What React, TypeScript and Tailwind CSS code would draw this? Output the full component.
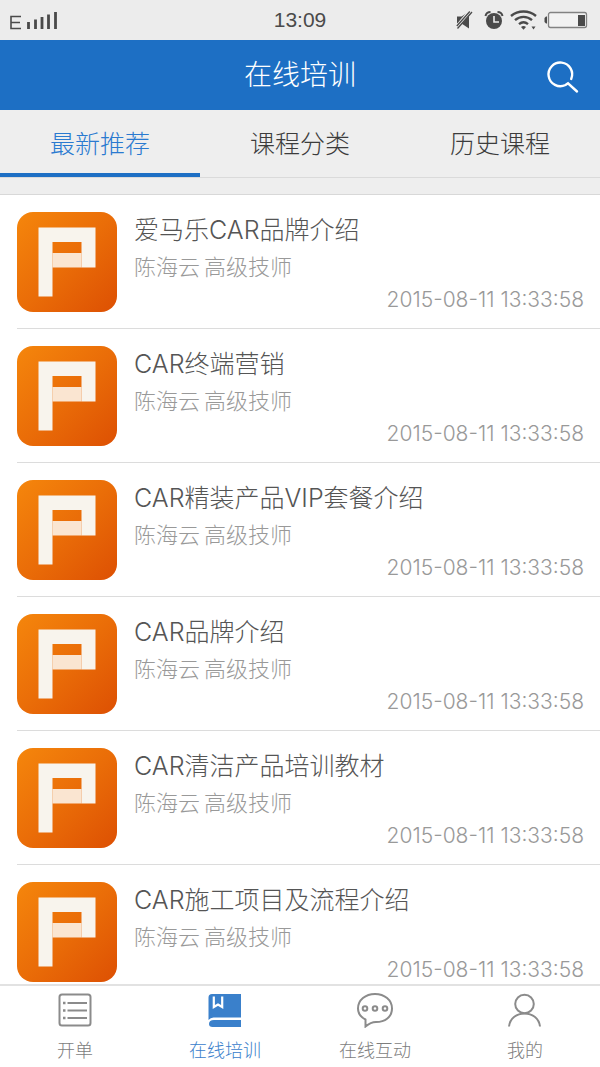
import React from "react";

const COURSES = [
  "爱马乐CAR品牌介绍",
  "CAR终端营销",
  "CAR精装产品VIP套餐介绍",
  "CAR品牌介绍",
  "CAR清洁产品培训教材",
  "CAR施工项目及流程介绍",
];

const TABS = ["最新推荐", "课程分类", "历史课程"];

function StatusBar() {
  return (
    <div className="grid h-10 shrink-0 grid-cols-3 items-center bg-[#ececec] text-[#4a4a4a]">
      <svg className="ml-2" width="52" height="24" viewBox="0 0 52 24" role="img" aria-label="信号">
        <path d="M13 8.500H3v12h10M3 14.500h9" fill="none" stroke="currentColor" strokeWidth="1.600" />
        <path d="M20.500 14v7M27.500 11.500v9.500M34 9v12M40.500 6.500v14.500M47.500 4v17" stroke="currentColor" strokeWidth="2.800" />
      </svg>
      <span className="text-center font-['Liberation_Sans',sans-serif] text-[21px] leading-10">13:09</span>
      <div className="flex items-center justify-end gap-1.5 pr-3">
        <svg className="mr-1" width="18" height="20" viewBox="0 0 18 20" role="img" aria-label="静音">
          <path d="M1 6.500h4.500L13 1.500v17L5.500 13.500H1z" fill="currentColor" />
          <path d="M0 18 15 0" stroke="#ececec" strokeWidth="4" />
          <path d="M1.500 18.500 16 2M.8 16 13.800 1.500" stroke="currentColor" strokeWidth="1.300" />
        </svg>
        <svg width="20" height="20" viewBox="0 0 20 20" role="img" aria-label="闹钟">
          <circle cx="10" cy="11" r="8" fill="currentColor" />
          <path d="M10 6v6h5" fill="none" stroke="#ececec" strokeWidth="1.600" />
          <path d="M1.500 6C2 3.500 4 2 6.500 2M18.500 6C18 3.500 16 2 13.500 2" fill="none" stroke="currentColor" strokeWidth="2" />
        </svg>
        <svg width="28" height="20" viewBox="0 0 28 20" role="img" aria-label="无线网络">
          <path d="M1 6c7-6 18-6 25 0M5 10.200c5-4.500 12-4.500 17 0M9 14.200c3-2.500 6-2.500 9 0" fill="none" stroke="currentColor" strokeWidth="2.400" />
          <path d="M11 17q2.500-2 5 0l-2.500 2.700z" fill="currentColor" />
          <path d="M21.500 16.500h4l-2 3z" fill="currentColor" />
        </svg>
        <svg width="44" height="18" viewBox="0 0 44 18" role="img" aria-label="电量">
          <rect x="4.500" y="1.500" width="38" height="15" rx="2" fill="#f2f2f2" stroke="#828282" strokeWidth="1.300" />
          <path d="M3 5.500H2L.5 7v4L2 12.500h1z" fill="currentColor" />
          <path d="M34 4h7v11h-7z" fill="currentColor" />
        </svg>
      </div>
    </div>
  );
}

function CourseIcon() {
  return (
    <svg className="size-[100px] shrink-0" viewBox="0 0 100 100" aria-hidden="true">
      <defs>
        <linearGradient id="course-fill" x1="0" y1="0" x2="1" y2="1">
          <stop offset="0" stopColor="#f5860c" />
          <stop offset="0.5" stopColor="#ea6d08" />
          <stop offset="1" stopColor="#dd5003" />
        </linearGradient>
      </defs>
      <rect width="100" height="100" rx="16" fill="url(#course-fill)" />
      <path d="M35.500 41h29v14.500h-29z" fill="#fae5d1" />
      <path d="M21.500 15.500h57v40h-14V30h-29v54.500h-14z" fill="#f8f4ed" />
    </svg>
  );
}

function ListIcon() {
  return (
    <svg width="34" height="34" viewBox="0 0 34 34" fill="none" stroke="#8b8b8b" aria-hidden="true">
      <rect x="1.500" y="1.500" width="31" height="31" rx="2.500" strokeWidth="2" />
      <path d="M9.500 10H29M9.500 17.500H29M9.500 25H29" strokeWidth="2.200" />
      <path d="M5 10h2.500M5 17.500h2.500M5 25h2.500" strokeWidth="2.500" />
    </svg>
  );
}

function BookIcon() {
  return (
    <svg width="34" height="34" viewBox="0 0 34 34" aria-hidden="true">
      <path d="M4 1h29v23.500H5.500Q2.500 24.500.5 27V4.500Q.5 1 4 1z" fill="#3a80cb" />
      <path d="M33 27v7H4.500Q1 34 1 31q0-4 5-4z" fill="#3a80cb" />
      <path d="M5.800 3.500v10.500L10 11.500l4.200 2.500V3.500" fill="none" stroke="#fff" strokeWidth="2.200" />
    </svg>
  );
}

function ChatIcon() {
  return (
    <svg width="36" height="36" viewBox="0 0 36 36" fill="none" stroke="#8b8b8b" strokeWidth="2" aria-hidden="true">
      <path d="M8.500 27.500C3.500 25 1 21 1 16.500 1 8 8.500 2 18 2s17 6 17 14.500-7 13.500-16 13.500c-4 0-7 1.500-10.500 4.500z" />
      <circle cx="8" cy="16.500" r="2.300" />
      <circle cx="18" cy="16.500" r="2.300" />
      <circle cx="28" cy="16.500" r="2.300" />
    </svg>
  );
}

function UserIcon() {
  return (
    <svg width="34" height="34" viewBox="0 0 34 34" fill="none" stroke="#8b8b8b" strokeWidth="2" aria-hidden="true">
      <circle cx="16.500" cy="11" r="9.300" />
      <path d="M1 33.500C2 25 9 20.500 16.500 20.500S31 25 32 33.500" />
    </svg>
  );
}

const NAV = [
  { label: "开单", icon: <ListIcon /> },
  { label: "在线培训", icon: <BookIcon />, active: true },
  { label: "在线互动", icon: <ChatIcon /> },
  { label: "我的", icon: <UserIcon /> },
];

export default function App() {
  return (
    <div className="flex h-dvh flex-col bg-white font-['Inter','Noto_Sans_CJK_SC',sans-serif] font-light">
      <StatusBar />
      <header className="grid h-[70px] shrink-0 grid-cols-[1fr_auto_1fr] items-center bg-[#1d6fc4] px-5 text-white">
        <h1 className="col-start-2 text-[28px] leading-10 font-light">在线培训</h1>
        <button type="button" aria-label="搜索" className="mt-1 justify-self-end">
          <svg width="34" height="34" viewBox="0 0 34 34" fill="none" stroke="currentColor" strokeWidth="2.400" strokeLinecap="round">
            <path d="M25.200 19A11.800 11.800 0 1 0 19.500 25L22 23.300 31 31.500" />
          </svg>
        </button>
      </header>
      <nav aria-label="课程" className="grid h-[68px] shrink-0 grid-cols-3 border-b border-[#dadada] bg-[#eeeeee]">
        {TABS.map((tab, i) => (
          <button
            key={tab}
            type="button"
            className={
              i === 0
                ? "border-b-4 border-[#1d6fc4] pt-1.5 text-[25px] text-[#2a7ad0]"
                : "border-b-4 border-transparent pt-1.5 text-[25px] text-[#3c3c3c]"
            }
          >
            {tab}
          </button>
        ))}
      </nav>
      <div className="h-[17px] shrink-0 border-b border-[#d8d8d8] bg-[#eeeeee]" />
      <main className="min-h-0 flex-1 overflow-y-auto [scrollbar-width:none]">
        <ul>
          {COURSES.map((title) => (
            <li key={title} className="ml-[17px] flex h-[134px] gap-[17px] border-b border-[#dcdcdc] pt-[17px] pr-4">
              <CourseIcon />
              <div className="flex min-w-0 flex-1 flex-col">
                <h2 className="text-[25px] leading-9 font-light text-[#555555]">{title}</h2>
                <p className="flex gap-1 text-[22px] leading-[38px] text-[#999999]">
                  <span>陈海云</span>
                  <span>高级技师</span>
                </p>
                <time className="self-end text-[21px] leading-7 text-[#999999]">2015-08-11 13:33:58</time>
              </div>
            </li>
          ))}
        </ul>
      </main>
      <footer className="h-[83px] shrink-0 border-t-2 border-[#e2e2e2] bg-white">
        <nav aria-label="主导航" className="grid grid-cols-4">
          {NAV.map(({ label, icon, active }) => (
            <a
              key={label}
              href="#"
              className={
                active
                  ? "flex flex-col items-center pt-1.5 text-[18px] leading-[30px] text-[#3a80cb]"
                  : "flex flex-col items-center pt-1.5 text-[18px] leading-[30px] text-[#7d7d7d]"
              }
            >
              <span className="flex h-9 items-center">{icon}</span>
              <span className="mt-2">{label}</span>
            </a>
          ))}
        </nav>
      </footer>
    </div>
  );
}
